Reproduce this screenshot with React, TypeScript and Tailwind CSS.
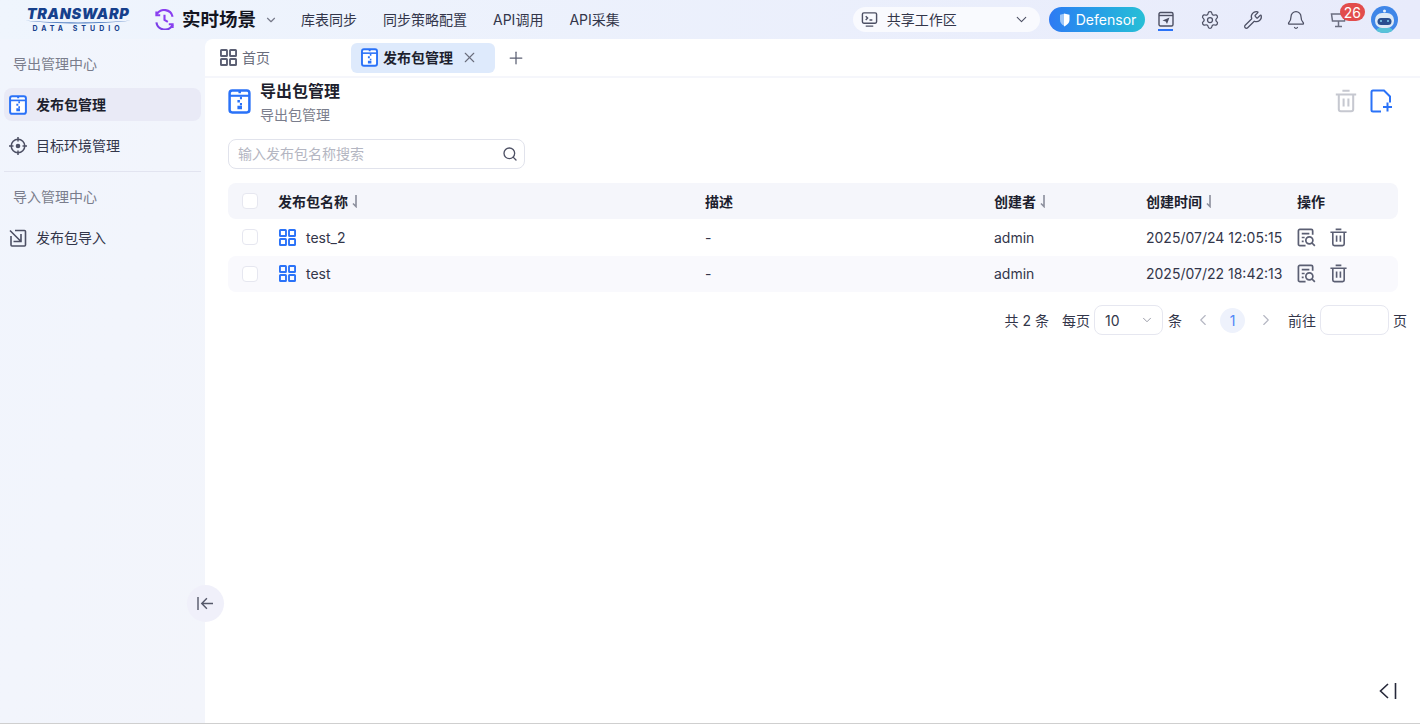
import React from 'react'
import { ChevronDown, ChevronLeft, ChevronRight, Plus, Search, Settings, Wrench, Bell, X } from 'lucide-react'

const font = 'font-[Inter,"Noto_Sans_CJK_SC",sans-serif]'

const ZipIcon = ({ className = 'h-[24px] w-[24px]' }: { className?: string }) => (
  <svg viewBox="0 0 24 24" className={className} fill="none">
    <rect x="2.5" y="1.5" width="19" height="21" rx="2.5" stroke="#2a72f8" strokeWidth="2.4" fill="#fff" />
    <path d="M2.5 6.5h19" stroke="#2a72f8" strokeWidth="2" />
    <path d="M11 2h2.4v2H11zM12.4 7.5h2v2.4h-2zM10 10.5h2.4v2.4H10zM12.4 13.5h2v2h-2zM10 16h4.4v3.5H10z" fill="#2a72f8" />
  </svg>
)

const GridIcon = ({ color, className }: { color: string; className: string }) => (
  <svg viewBox="0 0 18 18" className={className} fill="none" stroke={color} strokeWidth="2">
    <rect x="1" y="1" width="6.4" height="6.4" rx="0.6" />
    <rect x="10.6" y="1" width="6.4" height="6.4" rx="0.6" />
    <rect x="1" y="10.6" width="6.4" height="6.4" rx="0.6" />
    <rect x="10.6" y="10.6" width="6.4" height="6.4" rx="0.6" />
  </svg>
)

const TrashIcon = ({ color, className }: { color: string; className: string }) => (
  <svg viewBox="0 0 20 20" className={className} fill="none" stroke={color} strokeWidth="1.7">
    <path d="M1.5 4.5h17M7 1.5h6M4 4.5v12.3a1.7 1.7 0 0 0 1.7 1.7h8.6a1.7 1.7 0 0 0 1.7-1.7V4.5M8 8v6.5M12 8v6.5" />
  </svg>
)

const DetailIcon = () => (
  <svg viewBox="0 0 20 20" className="h-[19px] w-[19px]" fill="none" stroke="#5b5f73" strokeWidth="1.8">
    <path d="M9 18.5H3A1.5 1.5 0 0 1 1.5 17V3A1.5 1.5 0 0 1 3 1.5h12A1.5 1.5 0 0 1 16.5 3v4" />
    <path d="M5 6h8M5 10h3M5 14h2" />
    <circle cx="13" cy="13" r="3.7" />
    <path d="M15.8 15.8l3 3" />
  </svg>
)

const Checkbox = () => <div className="h-4 w-4 rounded-[4px] border border-[#e6e7f0] bg-white" />

const Sort = () => (
  <svg viewBox="0 0 8 14" className="ml-[3px] h-[14px] w-[8px]" fill="none" stroke="#8b8e9c" strokeWidth="1.6">
    <path d="M5 1v11.500L2 9.500" />
  </svg>
)

const rows = [
  { name: 'test_2', time: '2025/07/24 12:05:15' },
  { name: 'test', time: '2025/07/22 18:42:13' },
]

export default function App() {
  return (
    <div className={`${font} flex h-[724px] w-[1420px] flex-col overflow-hidden bg-white text-[14px] text-[#33364a]`}>
      <header className="flex h-[39px] shrink-0 items-center bg-gradient-to-r from-[#eff5fd] to-[#e8ebfb]">
        <div className="ml-[24px] flex w-[108px] flex-col items-center leading-none">
          <span className="text-[14.5px] font-black italic leading-[13px] tracking-[0.6px] text-[#16408c]">TRANSWARP</span>
          <svg viewBox="0 0 106 4" className="h-[4px] w-[106px]" fill="#5b85c4">
            <path d="M0 0.5C30 3 76 3 106 0.5 76 4.500 30 4.500 0 0.5z" />
          </svg>
          <span className="mt-[1px] text-[7px] font-bold tracking-[4px] text-[#16408c]">DATA STUDIO</span>
        </div>
        <svg viewBox="0 0 22 22" className="ml-[22px] h-[21px] w-[21px]" fill="none" stroke="#8a3ff0" strokeWidth="2.2">
          <path d="M3 5.5A9 9 0 0 1 19.5 8" />
          <path d="M19.5 16.5A9 9 0 0 1 2.5 14" stroke="#7b3fe8" />
          <path d="M11 6v5.500l3.500 2" />
          <path d="M2.500 2.500v4h4M19.500 20v-4h-4" />
        </svg>
        <span className="ml-[7px] text-[18.5px] font-semibold text-[#14151f]">实时场景</span>
        <ChevronDown className="ml-[8px] h-[14px] w-[14px] text-[#777a8a]" />
        <nav className="ml-[23px] flex gap-[26px] text-[14px] text-[#33364a]">
          <span>库表同步</span>
          <span>同步策略配置</span>
          <span>API调用</span>
          <span>API采集</span>
        </nav>
        <div className="ml-[233px] flex h-[25px] w-[187px] items-center rounded-full bg-[#f9fafe] pl-[8px] pr-[10px]">
          <svg viewBox="0 0 18 18" className="h-[17px] w-[17px]" fill="none" stroke="#4d5064" strokeWidth="1.5">
            <rect x="1.5" y="2" width="15" height="11" rx="1.5" />
            <path d="M5 16h8M5 5.500l2 2-2 2M9 9.500h3" />
          </svg>
          <span className="ml-[9px] text-[14px]">共享工作区</span>
          <ChevronDown className="ml-auto h-[17px] w-[17px] text-[#4d5064]" strokeWidth={1.5} />
        </div>
        <div className="ml-[9px] flex h-[25px] w-[96px] items-center rounded-full bg-gradient-to-r from-[#2e7af3] to-[#28bfd6] pl-[9px] text-[14px] text-white">
          <svg viewBox="0 0 13 14" className="h-[14px] w-[13px]" fill="#fff">
            <path d="M6 .8 2 1.800v5c0 2.800 1.500 4.700 4 6z" opacity="0.55" />
            <path d="M6 .5l5.500 1.300v5c0 3.200-2.500 5.300-5.500 6.700z" />
          </svg>
          <span className="ml-[5px]">Defensor</span>
        </div>
        <div className="ml-[12px] flex h-[39px] w-[18px] flex-col items-center">
          <svg viewBox="0 0 16 16" className="mt-[11px] h-[16px] w-[16px]" fill="none" stroke="#4d5064" strokeWidth="1.4">
            <rect x="1" y="1.5" width="14" height="13.5" rx="1.5" />
            <path d="M1 4.500h14" />
            <path d="M4.500 9.500l7-3-2.500 6.500-1.300-2.500z" fill="#4d5064" stroke="none" />
          </svg>
          <div className="mt-[2px] h-[2px] w-[15px] bg-[#2a72f8]" />
        </div>
        <Settings className="ml-[25px] h-[20px] w-[20px] text-[#4d5064]" strokeWidth={1.5} />
        <Wrench className="ml-[23px] h-[20px] w-[20px] text-[#4d5064]" strokeWidth={1.5} />
        <Bell className="ml-[23px] h-[20px] w-[20px] text-[#4d5064]" strokeWidth={1.5} />
        <div className="relative ml-[24px] h-[17px] w-[17px]">
          <svg viewBox="0 0 17 17" className="h-[17px] w-[17px]" fill="none" stroke="#6b6e80" strokeWidth="1.5">
            <path d="M1.500 3h14l-1 7h-12zM8.500 10v5M5 15.500h7" />
          </svg>
          <span className="absolute left-[10px] top-[-8px] flex h-[18px] w-[25px] items-center justify-center rounded-full bg-[#e24c4c] text-[14px] text-white">26</span>
        </div>
        <svg viewBox="0 0 27 27" className="ml-[24px] h-[27px] w-[27px]">
          <circle cx="13.500" cy="13.500" r="13.500" fill="#3f86e8" />
          <ellipse cx="13.500" cy="24" rx="8" ry="3" fill="#58c3d8" />
          <circle cx="13.500" cy="5" r="1.500" fill="#eaf2fb" />
          <rect x="4" y="7" width="19" height="15" rx="7" fill="#dfeaf6" />
          <rect x="6.500" y="12" width="14" height="7" rx="3.500" fill="#2a4f8f" />
          <circle cx="10" cy="15" r="1" fill="#7fd0ee" />
          <circle cx="17" cy="15" r="1" fill="#7fd0ee" />
        </svg>
      </header>

      <div className="flex min-h-0 flex-1 border-b border-[#cfcfcf] bg-[#f1f5fd]">
        <aside className="relative z-10 w-[205px] shrink-0 bg-gradient-to-br from-[#f1f5fd] to-[#f3f5fb] px-[4px]">
          <div className="ml-[9px] flex h-[49px] items-center text-[#7a7d8c]">导出管理中心</div>
          <div className="flex h-[33px] items-center rounded-[8px] bg-[#e9eaf6] pl-[4px] font-semibold text-[#1d1f2e]">
            <ZipIcon className="h-[20px] w-[20px]" />
            <span className="ml-[8px]">发布包管理</span>
          </div>
          <div className="mt-[8px] flex h-[33px] items-center pl-[5px]">
            <svg viewBox="0 0 18 18" className="h-[18px] w-[18px]" fill="none" stroke="#4d5064" strokeWidth="1.5">
              <circle cx="9" cy="9" r="6.8" />
              <path d="M9 0v4.500M9 13.500V18M0 9h4.500M13.500 9H18" />
              <circle cx="9" cy="9" r="2.300" fill="#4d5064" stroke="none" />
            </svg>
            <span className="ml-[9px]">目标环境管理</span>
          </div>
          <div className="mt-[9px] border-t border-[#e2e4f0]" />
          <div className="ml-[9px] flex h-[48px] items-center text-[#7a7d8c]">导入管理中心</div>
          <div className="mt-[1px] flex h-[33px] items-center pl-[5px]">
            <svg viewBox="0 0 18 18" className="h-[18px] w-[18px]" fill="none" stroke="#4d5064" strokeWidth="1.6">
              <path d="M6 1.500h9.500a1 1 0 0 1 1 1V16a1 1 0 0 1-1 1H3a1 1 0 0 1-1-1V7" />
              <path d="M1 1.500l10.500 10.500M12 5v7.500H4.500" />
            </svg>
            <span className="ml-[9px]">发布包导入</span>
          </div>
          <div className="absolute left-[187px] top-[546px] flex h-[37px] w-[37px] items-center justify-center rounded-full bg-[#f0f0fa]">
            <svg viewBox="0 0 18 16" className="h-[15px] w-[17px]" fill="none" stroke="#55586a" strokeWidth="1.5">
              <path d="M1 1v14M17 8H5M10.500 2.500 5 8l5.500 5.500" />
            </svg>
          </div>
        </aside>

        <main className="relative min-w-0 flex-1 rounded-tl-[8px] bg-white">
          <div className="flex h-[39px] items-center border-b-2 border-[#f5f6fb] pl-[15px]">
            <GridIcon color="#5b5f73" className="h-[17px] w-[17px]" />
            <span className="ml-[5px] text-[#6a6d7c]">首页</span>
            <div className="ml-[81px] flex h-[30px] w-[144px] items-center rounded-[6px] bg-[#deeafc] pl-[9px] font-semibold text-[#1d1f2e]">
              <ZipIcon className="h-[19px] w-[19px]" />
              <span className="ml-[4px]">发布包管理</span>
              <X className="ml-[8px] h-[17px] w-[17px] text-[#6a6d7c]" strokeWidth={1.5} />
            </div>
            <Plus className="ml-[11px] h-[20px] w-[20px] text-[#5b5f73]" strokeWidth={1.5} />
          </div>

          <div className="pl-[23px] pr-[22px]">
            <div className="flex h-[48px] items-start">
              <ZipIcon className="ml-[-1px] mt-[11px] h-[25px] w-[25px]" />
              <div className="ml-[8px] mt-[2px]">
                <div className="text-[16px] font-semibold leading-[22px] text-[#1d1f2e]">导出包管理</div>
                <div className="mt-[3px] leading-[20px] text-[#7a7d8c]">导出包管理</div>
              </div>
              <TrashIcon color="#c6c8d0" className="ml-auto mt-[11px] h-[24px] w-[24px]" />
              <svg viewBox="0 0 24 24" className="ml-[11px] mr-[5px] mt-[11px] h-[24px] w-[24px]" fill="none" stroke="#2a72f8" strokeWidth="2">
                <path d="M12 22.500H4A1.500 1.500 0 0 1 2.500 21V3A1.500 1.500 0 0 1 4 1.500h11l6 6v6" />
                <path d="M14 18h9M18.500 13.500v9" />
              </svg>
            </div>
            <div className="mt-[13px] flex h-[30px] w-[297px] items-center rounded-[8px] border border-[#e1e3ec] pb-[1px] pl-[9px] pr-[6px]">
              <span className="text-[#b4b6c2]">输入发布包名称搜索</span>
              <Search className="ml-auto h-[16px] w-[16px] text-[#4d5064]" strokeWidth={2} />
            </div>

            <div className="mt-[14px] w-[1170px]">
              <div className="flex h-[36px] items-center rounded-[8px] bg-[#f5f6fb] font-semibold text-[#1d1f2e]">
                <div className="w-[50px] pl-[14px]"><Checkbox /></div>
                <div className="flex w-[427px] items-center">发布包名称<Sort /></div>
                <div className="w-[289px]">描述</div>
                <div className="flex w-[152px] items-center">创建者<Sort /></div>
                <div className="flex w-[151px] items-center">创建时间<Sort /></div>
                <div>操作</div>
              </div>
              {rows.map((row, i) => (
                <div key={row.name} className={`flex h-[36.5px] items-center rounded-[8px] ${i % 2 === 1 ? 'bg-[#f9f9fd]' : ''}`}>
                  <div className="w-[50px] pl-[14px]"><Checkbox /></div>
                  <div className="flex w-[427px] items-center">
                    <GridIcon color="#2a72f8" className="ml-[1px] h-[17px] w-[17px]" />
                    <span className="ml-[10px]">{row.name}</span>
                  </div>
                  <div className="w-[289px]">-</div>
                  <div className="w-[152px]">admin</div>
                  <div className="w-[151px] whitespace-nowrap">{row.time}</div>
                  <div className="flex items-center gap-[13px]">
                    <DetailIcon />
                    <TrashIcon color="#5b5f73" className="h-[19px] w-[19px]" />
                  </div>
                </div>
              ))}
            </div>

            <div className="mr-[-9px] mt-[13px] flex h-[30px] items-center justify-end">
              <span>共 2 条</span>
              <span className="ml-[13px]">每页</span>
              <div className="ml-[4px] flex h-[30px] w-[69px] items-center rounded-[8px] border border-[#e6e7f0] pl-[10px] pr-[8px]">
                10
                <ChevronDown className="ml-auto h-[14px] w-[14px] text-[#8b8e9c]" strokeWidth={1.5} />
              </div>
              <span className="ml-[5px]">条</span>
              <ChevronLeft className="ml-[12px] h-[18px] w-[18px] text-[#b4b6c2]" strokeWidth={1.5} />
              <div className="ml-[8px] flex h-[25px] w-[25px] items-center justify-center rounded-full bg-[#eef2fc] text-[#4f86f7]">1</div>
              <ChevronRight className="ml-[12px] h-[18px] w-[18px] text-[#b4b6c2]" strokeWidth={1.5} />
              <span className="ml-[13px]">前往</span>
              <div className="ml-[4px] h-[30px] w-[69px] rounded-[8px] border border-[#e6e7f0]" />
              <span className="ml-[4px]">页</span>
            </div>
          </div>

          <svg viewBox="0 0 20 16" className="absolute left-[1173px] top-[644px] h-[16px] w-[20px]" fill="none" stroke="#26283a" strokeWidth="1.6">
            <path d="M10 1 2.500 8l7.500 7M17.500 0v16" />
          </svg>
        </main>
      </div>
    </div>
  )
}
